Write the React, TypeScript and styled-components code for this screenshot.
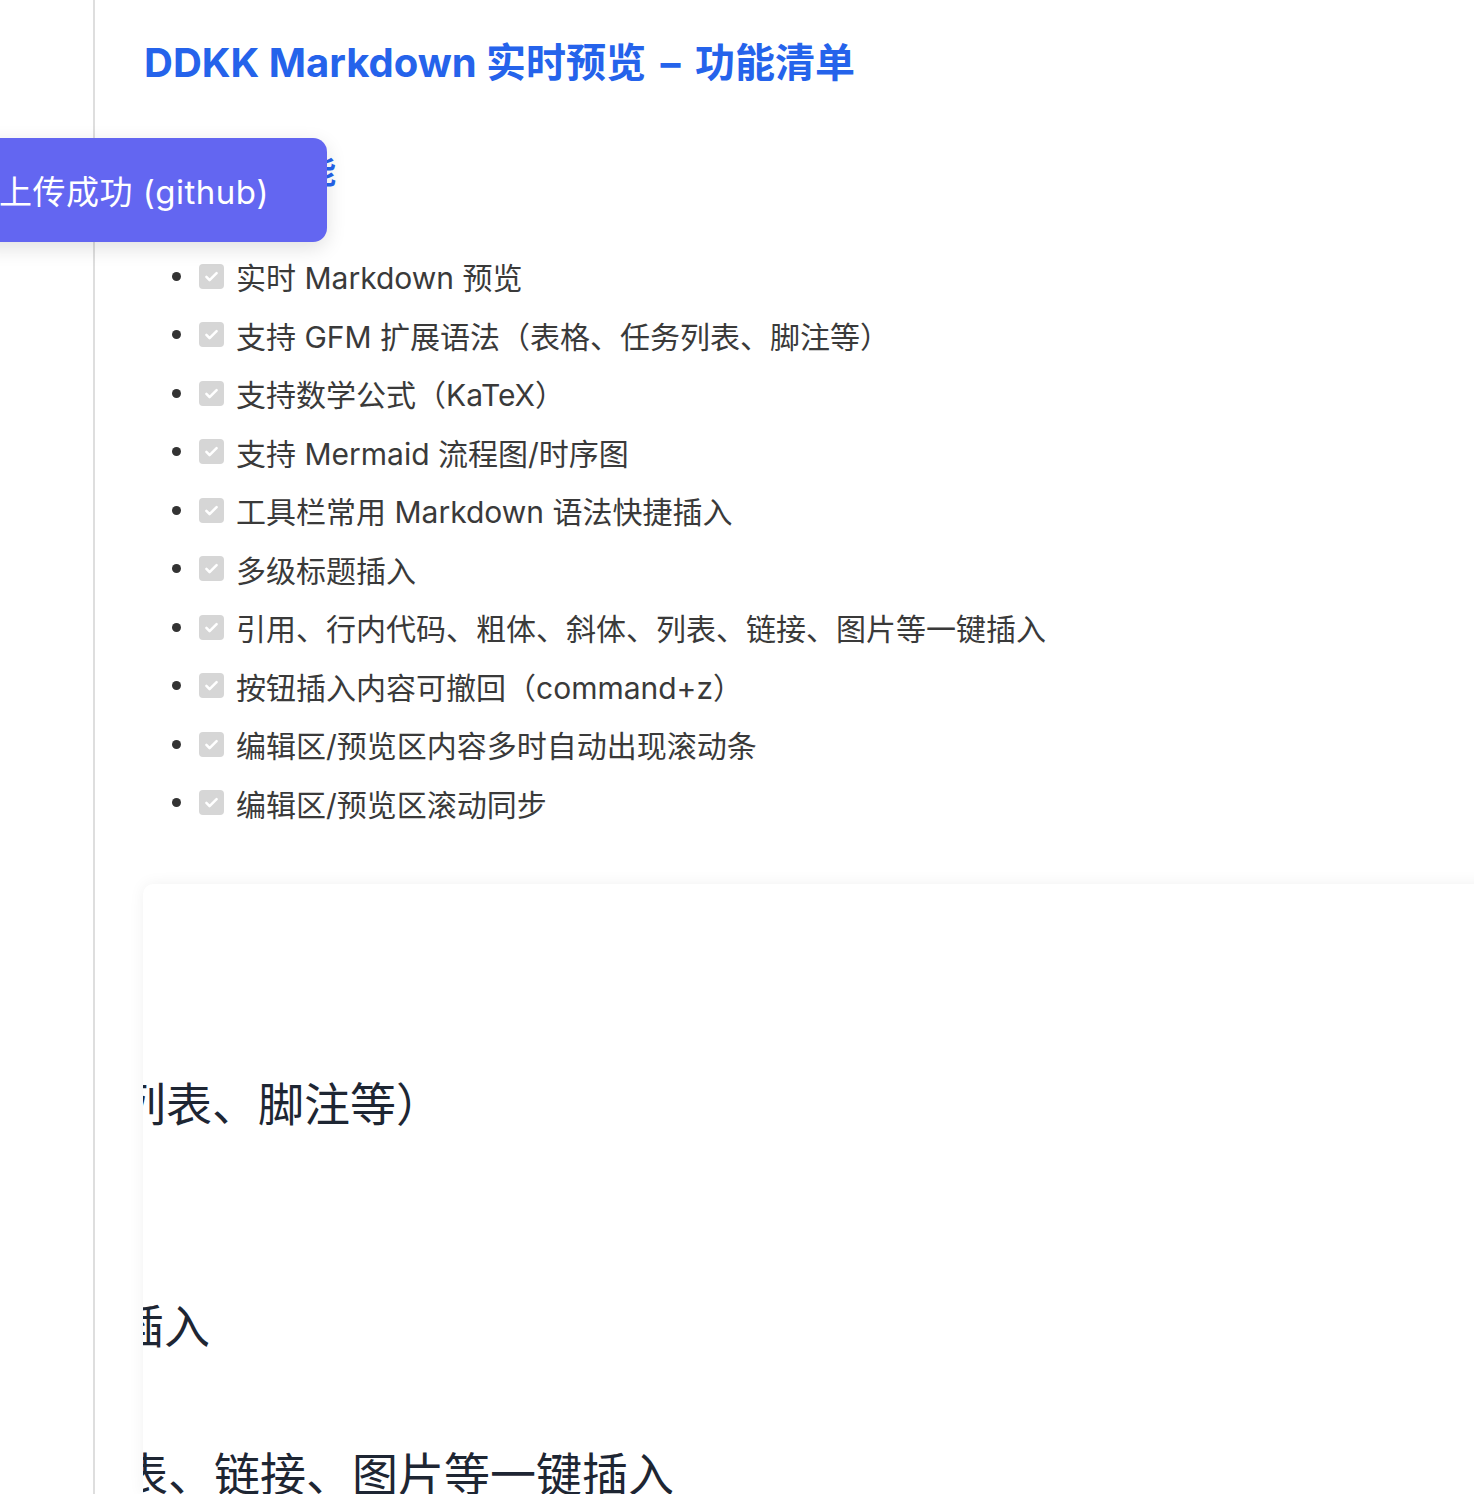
import React from "react";
import styled, { createGlobalStyle } from "styled-components";

const Global = createGlobalStyle`
  html, body {
    margin: 0;
    padding: 0;
    background: #ffffff;
    overflow: hidden;
  }
  body {
    font-family: Inter, "Noto Sans CJK SC", "Noto Sans", sans-serif;
  }
  * { box-sizing: border-box; }
`;

const Page = styled.div`
  position: relative;
  display: flex;
  width: 1474px;
  height: 1494px;
  overflow: hidden;
`;

const Gutter = styled.aside`
  flex: 0 0 95px;
  border-right: 2px solid #dedede;
`;

const Main = styled.main`
  flex: 1;
  display: flex;
  flex-direction: column;
  padding-left: 49px;
  min-width: 0;
`;

const Title = styled.h1`
  margin: 35px 0 0;
  font-size: 40px;
  line-height: 56px;
  font-weight: 700;
  color: #2563eb;
  white-space: nowrap;
`;

const Dash = styled.span`
  margin: 0 5px;
`;

const Heading = styled.h2`
  margin: 59px 0 0;
  font-size: 32px;
  line-height: 44px;
  font-weight: 700;
  color: #2563eb;
  white-space: nowrap;
`;

const List = styled.ul`
  list-style: none;
  margin: 53px 0 0;
  padding: 0 0 0 28px;
`;

const Item = styled.li`
  display: flex;
  align-items: center;
  height: 58.5px;
  font-size: 30px;
  color: #3a3a3a;
  white-space: nowrap;

  &::before {
    content: "";
    flex: 0 0 9px;
    height: 9px;
    border-radius: 50%;
    background: #333333;
    margin-right: 18px;
  }
`;

const Check = styled.span`
  flex: 0 0 25px;
  height: 25px;
  border-radius: 4px;
  background: #d6d6d6;
  display: inline-flex;
  align-items: center;
  justify-content: center;
  margin-right: 12px;
`;

const Card = styled.section`
  margin: 52px 0 0 -1px;
  width: calc(100% + 60px);
  flex: 1;
  background: #ffffff;
  border-radius: 10px 0 0 0;
  box-shadow: 0 0 16px rgba(0, 0, 0, 0.06);
  overflow: hidden;
  padding-top: 106px;
`;

const ZoomLine = styled.div<{ $shift: number }>`
  height: 74px;
  display: flex;
  align-items: center;
  margin-left: ${(p) => p.$shift}px;
  font-size: 46px;
  color: #1e2633;
  white-space: nowrap;
  font-family: "Noto Sans CJK SC", sans-serif;
`;

const Toast = styled.div`
  position: absolute;
  top: 138px;
  left: -26px;
  width: 353px;
  height: 104px;
  padding-left: 25px;
  display: flex;
  align-items: center;
  background: #6366f1;
  color: #ffffff;
  font-size: 33px;
  letter-spacing: 0.5px;
  border-radius: 14px;
  box-shadow: 0 6px 20px rgba(0, 0, 0, 0.12);
  white-space: nowrap;
`;

const items = [
  "实时 Markdown 预览",
  "支持 GFM 扩展语法（表格、任务列表、脚注等）",
  "支持数学公式（KaTeX）",
  "支持 Mermaid 流程图/时序图",
  "工具栏常用 Markdown 语法快捷插入",
  "多级标题插入",
  "引用、行内代码、粗体、斜体、列表、链接、图片等一键插入",
  "按钮插入内容可撤回（command+z）",
  "编辑区/预览区内容多时自动出现滚动条",
  "编辑区/预览区滚动同步",
];

const zoomLines: { text: string; shift: number }[] = [
  { text: "", shift: 0 },
  { text: "列表、脚注等）", shift: -23 },
  { text: "", shift: 0 },
  { text: "", shift: 0 },
  { text: "插入", shift: -25 },
  { text: "", shift: 0 },
  { text: "表、链接、图片等一键插入", shift: -21 },
];

const CheckIcon = () => (
  <svg width="17" height="17" viewBox="0 0 16 16" fill="none">
    <path d="M3.2 8.4l3 3L12.8 4.8" stroke="#ffffff" strokeWidth="2.4" strokeLinecap="round" strokeLinejoin="round" />
  </svg>
);

export default function App() {
  return (
    <>
      <Global />
      <Page>
        <Gutter />
        <Main>
          <Title>
            DDKK Markdown 实时预览<Dash> – </Dash>功能清单
          </Title>
          <Heading>已实现的功能</Heading>
          <List>
            {items.map((t) => (
              <Item key={t}>
                <Check>
                  <CheckIcon />
                </Check>
                {t}
              </Item>
            ))}
          </List>
          <Card>
            {zoomLines.map((l, i) => (
              <ZoomLine key={i} $shift={l.shift}>
                {l.text}
              </ZoomLine>
            ))}
          </Card>
        </Main>
        <Toast>上传成功 (github)</Toast>
      </Page>
    </>
  );
}
